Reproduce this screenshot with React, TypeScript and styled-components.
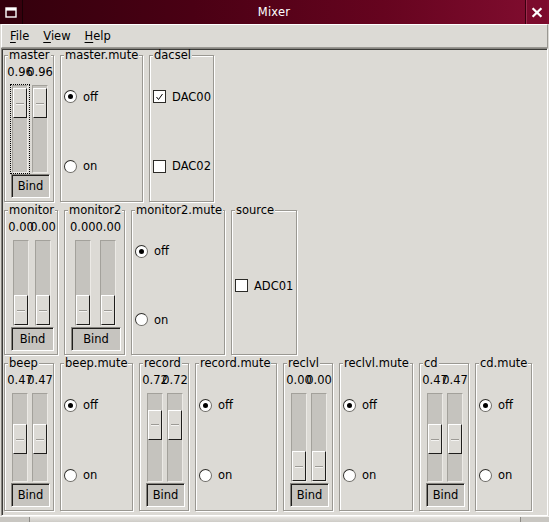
import React from 'react';
import styled, { createGlobalStyle } from 'styled-components';

const GlobalStyle = createGlobalStyle`
  html, body {
    margin: 0;
    padding: 0;
    background: #dcdad5;
  }
  body {
    font-family: 'DejaVu Sans', 'Liberation Sans', sans-serif;
    font-size: 11.5px;
    color: #000;
  }
  * {
    box-sizing: border-box;
  }
`;

const Window = styled.div`
  width: 549px;
  height: 522px;
  display: flex;
  flex-direction: column;
  overflow: hidden;
  background: #dcdad5;
`;

const TitleBar = styled.div`
  height: 24px;
  flex: none;
  display: flex;
  padding-right: 2px;
  background: linear-gradient(90deg, #33000c 0%, #4a0014 35%, #66041f 70%, #820d30 100%);
  color: #fff;
`;

const IconBox = styled.div`
  width: 23px;
  border-right: 1px solid #1a0005;
  display: flex;
  align-items: center;
  justify-content: center;
`;

const Title = styled.div`
  flex: 1;
  text-align: center;
  line-height: 24px;
  font-size: 11.5px;
  letter-spacing: 0.2px;
`;

const CloseBox = styled.div`
  width: 22px;
  border-left: 1px solid #3a000f;
  box-shadow: inset 1px 0 0 #9b2d4d;
  background: #7c0b2d;
  display: flex;
  align-items: center;
  justify-content: center;
`;

const MenuBar = styled.div`
  height: 24px;
  flex: none;
  margin: 0 1px;
  padding-left: 1px;
  display: flex;
  align-items: center;
  border: 1px solid;
  border-color: #fff #9a9893 #9a9893 #fff;
`;

const MenuItem = styled.span`
  padding: 0 7px;
  margin-right: 0;

  u {
    text-decoration: underline;
    text-underline-offset: 2px;
  }
`;

const Viewport = styled.div`
  flex: 1;
  margin: 0 1px;
  padding: 1px 0 0 2px;
  border: 1px solid;
  border-color: #86847f #fff #fff #86847f;
  box-shadow: inset 1px 1px 0 #3c3b38;
  display: flex;
  flex-direction: column;
  gap: 3px;
`;

const Row = styled.div<{ $h: number }>`
  flex: none;
  height: ${p => p.$h}px;
  display: flex;
  gap: 6px;
`;

const Group = styled.fieldset<{ $w: number }>`
  width: ${p => p.$w}px;
  min-width: 0;
  margin: 0;
  padding: 0;
  border: 1px solid #9a9892;
  box-shadow: inset 1px 1px 0 #fff, 1px 1px 0 #fff;
  display: flex;
  flex-direction: column;
`;

const Legend = styled.legend`
  margin-left: 3px;
  padding: 0 1px;
  line-height: 11px;
  background: #dcdad5;
  white-space: nowrap;
`;

const MixBody = styled.div`
  flex: 1;
  display: flex;
  flex-direction: column;
  padding: 0 3px 3px 5px;
  min-height: 0;
`;

const Channels = styled.div`
  flex: 1;
  display: flex;
  min-height: 0;
`;

const Channel = styled.div`
  flex: 1;
  min-width: 0;
  display: flex;
  flex-direction: column;
  align-items: center;
`;

const Value = styled.div`
  margin-top: 4px;
  line-height: 14px;
  white-space: nowrap;
`;

const TroughWrap = styled.div<{ $focus?: boolean }>`
  flex: 1;
  margin-top: 6px;
  padding: 0 1px;
  display: flex;
  outline: ${p => (p.$focus ? '1px dotted #000' : 'none')};
`;

const Trough = styled.div`
  width: 16px;
  position: relative;
  background: #c5c3be;
  border: 1px solid;
  border-color: #a3a19b #eceae6 #eceae6 #a3a19b;
`;

const Thumb = styled.div`
  position: absolute;
  left: 0;
  right: 0;
  height: 30px;
  background: #dcdad5;
  border: 1px solid;
  border-color: #fff #1e1d1b #1e1d1b #fff;
  display: flex;
  align-items: center;
  justify-content: center;

  &::after {
    content: '';
    width: 8px;
    height: 1px;
    background: #9c9a95;
    box-shadow: 0 1px 0 #f4f3f1;
  }
`;

const BindButton = styled.div`
  flex: none;
  height: 24px;
  margin: 1px 0 0 1px;
  background: #c6c4bf;
  border: 1px solid;
  border-color: #85837e #fff #fff #85837e;
  box-shadow: inset 1px 1px 0 #1f1e1c;
  display: flex;
  align-items: center;
  justify-content: center;
`;

const OptionBody = styled.div`
  flex: 1;
  display: flex;
  flex-direction: column;
  padding: 1px 0 0 3px;
`;

const Option = styled.div`
  flex: 1;
  display: flex;
  align-items: center;
  gap: 6px;
  white-space: nowrap;
`;

const Radio = styled.span<{ $on: boolean }>`
  flex: none;
  width: 13px;
  height: 13px;
  border-radius: 50%;
  border: 1px solid;
  border-color: #2f2e2b #6f6d69 #6f6d69 #2f2e2b;
  background: #fff;
  display: flex;
  align-items: center;
  justify-content: center;

  &::after {
    content: '';
    display: ${p => (p.$on ? 'block' : 'none')};
    width: 5px;
    height: 5px;
    border-radius: 50%;
    background: #000;
  }
`;

const CheckBox = styled.span`
  flex: none;
  width: 13px;
  height: 13px;
  border: 1px solid #2c2b28;
  background: #fff;
  display: flex;
`;

const Strip = styled.div`
  flex: none;
  height: 6px;
  display: flex;
  border-top: 1px solid #f2f1ee;
`;

const StripEnd = styled.div<{ $side: 'left' | 'right' }>`
  width: ${p => (p.$side === 'left' ? 30 : 29)}px;
  background: #c8c6c1;
  border-${p => (p.$side === 'left' ? 'right' : 'left')}: 1px solid #8c8a85;
`;

const StripMid = styled.div`
  flex: 1;
  background: linear-gradient(#e6e4e0, #cdcbc6);
`;

type Mix = { kind: 'mix'; name: string; w: number; vals: [number, number]; focus?: boolean };
type Opts = { kind: 'radio' | 'check'; name: string; w: number; items: { label: string; on: boolean }[] };
type Item = Mix | Opts;

const mute = (name: string, w: number): Opts => ({
  kind: 'radio',
  name,
  w,
  items: [
    { label: 'off', on: true },
    { label: 'on', on: false },
  ],
});

const rows: { h: number; items: Item[] }[] = [
  {
    h: 152,
    items: [
      { kind: 'mix', name: 'master', w: 50, vals: [0.96, 0.96], focus: true },
      mute('master.mute', 83),
      {
        kind: 'check',
        name: 'dacsel',
        w: 65,
        items: [
          { label: 'DAC00', on: true },
          { label: 'DAC02', on: false },
        ],
      },
    ],
  },
  {
    h: 150,
    items: [
      { kind: 'mix', name: 'monitor', w: 54, vals: [0, 0] },
      { kind: 'mix', name: 'monitor2', w: 61, vals: [0, 0] },
      mute('monitor2.mute', 94),
      { kind: 'check', name: 'source', w: 66, items: [{ label: 'ADC01', on: false }] },
    ],
  },
  {
    h: 153,
    items: [
      { kind: 'mix', name: 'beep', w: 50, vals: [0.47, 0.47] },
      mute('beep.mute', 73),
      { kind: 'mix', name: 'record', w: 50, vals: [0.72, 0.72] },
      mute('record.mute', 82),
      { kind: 'mix', name: 'reclvl', w: 50, vals: [0, 0] },
      mute('reclvl.mute', 74),
      { kind: 'mix', name: 'cd', w: 50, vals: [0.47, 0.47] },
      mute('cd.mute', 57),
    ],
  },
];

function Slider({ value, focus }: { value: number; focus?: boolean }) {
  return (
    <Channel>
      <Value>{value.toFixed(2)}</Value>
      <TroughWrap $focus={focus}>
        <Trough>
          <Thumb style={{ top: `calc((100% - 30px) * ${1 - value})` }} />
        </Trough>
      </TroughWrap>
    </Channel>
  );
}

function MixGroup({ g }: { g: Item }) {
  if (g.kind === 'mix') {
    return (
      <Group $w={g.w}>
        <Legend>{g.name}</Legend>
        <MixBody>
          <Channels>
            <Slider value={g.vals[0]} focus={g.focus} />
            <Slider value={g.vals[1]} />
          </Channels>
          <BindButton>Bind</BindButton>
        </MixBody>
      </Group>
    );
  }
  return (
    <Group $w={g.w}>
      <Legend>{g.name}</Legend>
      <OptionBody>
        {g.items.map(it => (
          <Option key={it.label}>
            {g.kind === 'radio' ? (
              <Radio $on={it.on} />
            ) : (
              <CheckBox>
                {it.on && (
                  <svg width="11" height="11" viewBox="0 0 11 11">
                    <path d="M2.5 6 L4.5 8.5 L8.5 3" fill="none" stroke="#000" strokeWidth="1" />
                  </svg>
                )}
              </CheckBox>
            )}
            <span>{it.label}</span>
          </Option>
        ))}
      </OptionBody>
    </Group>
  );
}

export default function App() {
  return (
    <>
      <GlobalStyle />
      <Window>
        <TitleBar>
          <IconBox>
            <svg width="12" height="11" viewBox="0 0 12 11">
              <rect x="1" y="1" width="10" height="9" fill="none" stroke="#fff" strokeWidth="1.4" />
              <rect x="1" y="1" width="10" height="2.6" fill="#fff" />
            </svg>
          </IconBox>
          <Title>Mixer</Title>
          <CloseBox>
            <svg width="12" height="11" viewBox="0 0 12 11">
              <path d="M1.6 1.2 L10.4 9.8 M10.4 1.2 L1.6 9.8" stroke="#fff" strokeWidth="2.3" />
            </svg>
          </CloseBox>
        </TitleBar>
        <MenuBar>
          <MenuItem>
            <u>F</u>ile
          </MenuItem>
          <MenuItem>
            <u>V</u>iew
          </MenuItem>
          <MenuItem>
            <u>H</u>elp
          </MenuItem>
        </MenuBar>
        <Viewport>
          {rows.map((r, i) => (
            <Row key={i} $h={r.h}>
              {r.items.map(g => (
                <MixGroup key={g.name} g={g} />
              ))}
            </Row>
          ))}
        </Viewport>
        <Strip>
          <StripEnd $side="left" />
          <StripMid />
          <StripEnd $side="right" />
        </Strip>
      </Window>
    </>
  );
}
